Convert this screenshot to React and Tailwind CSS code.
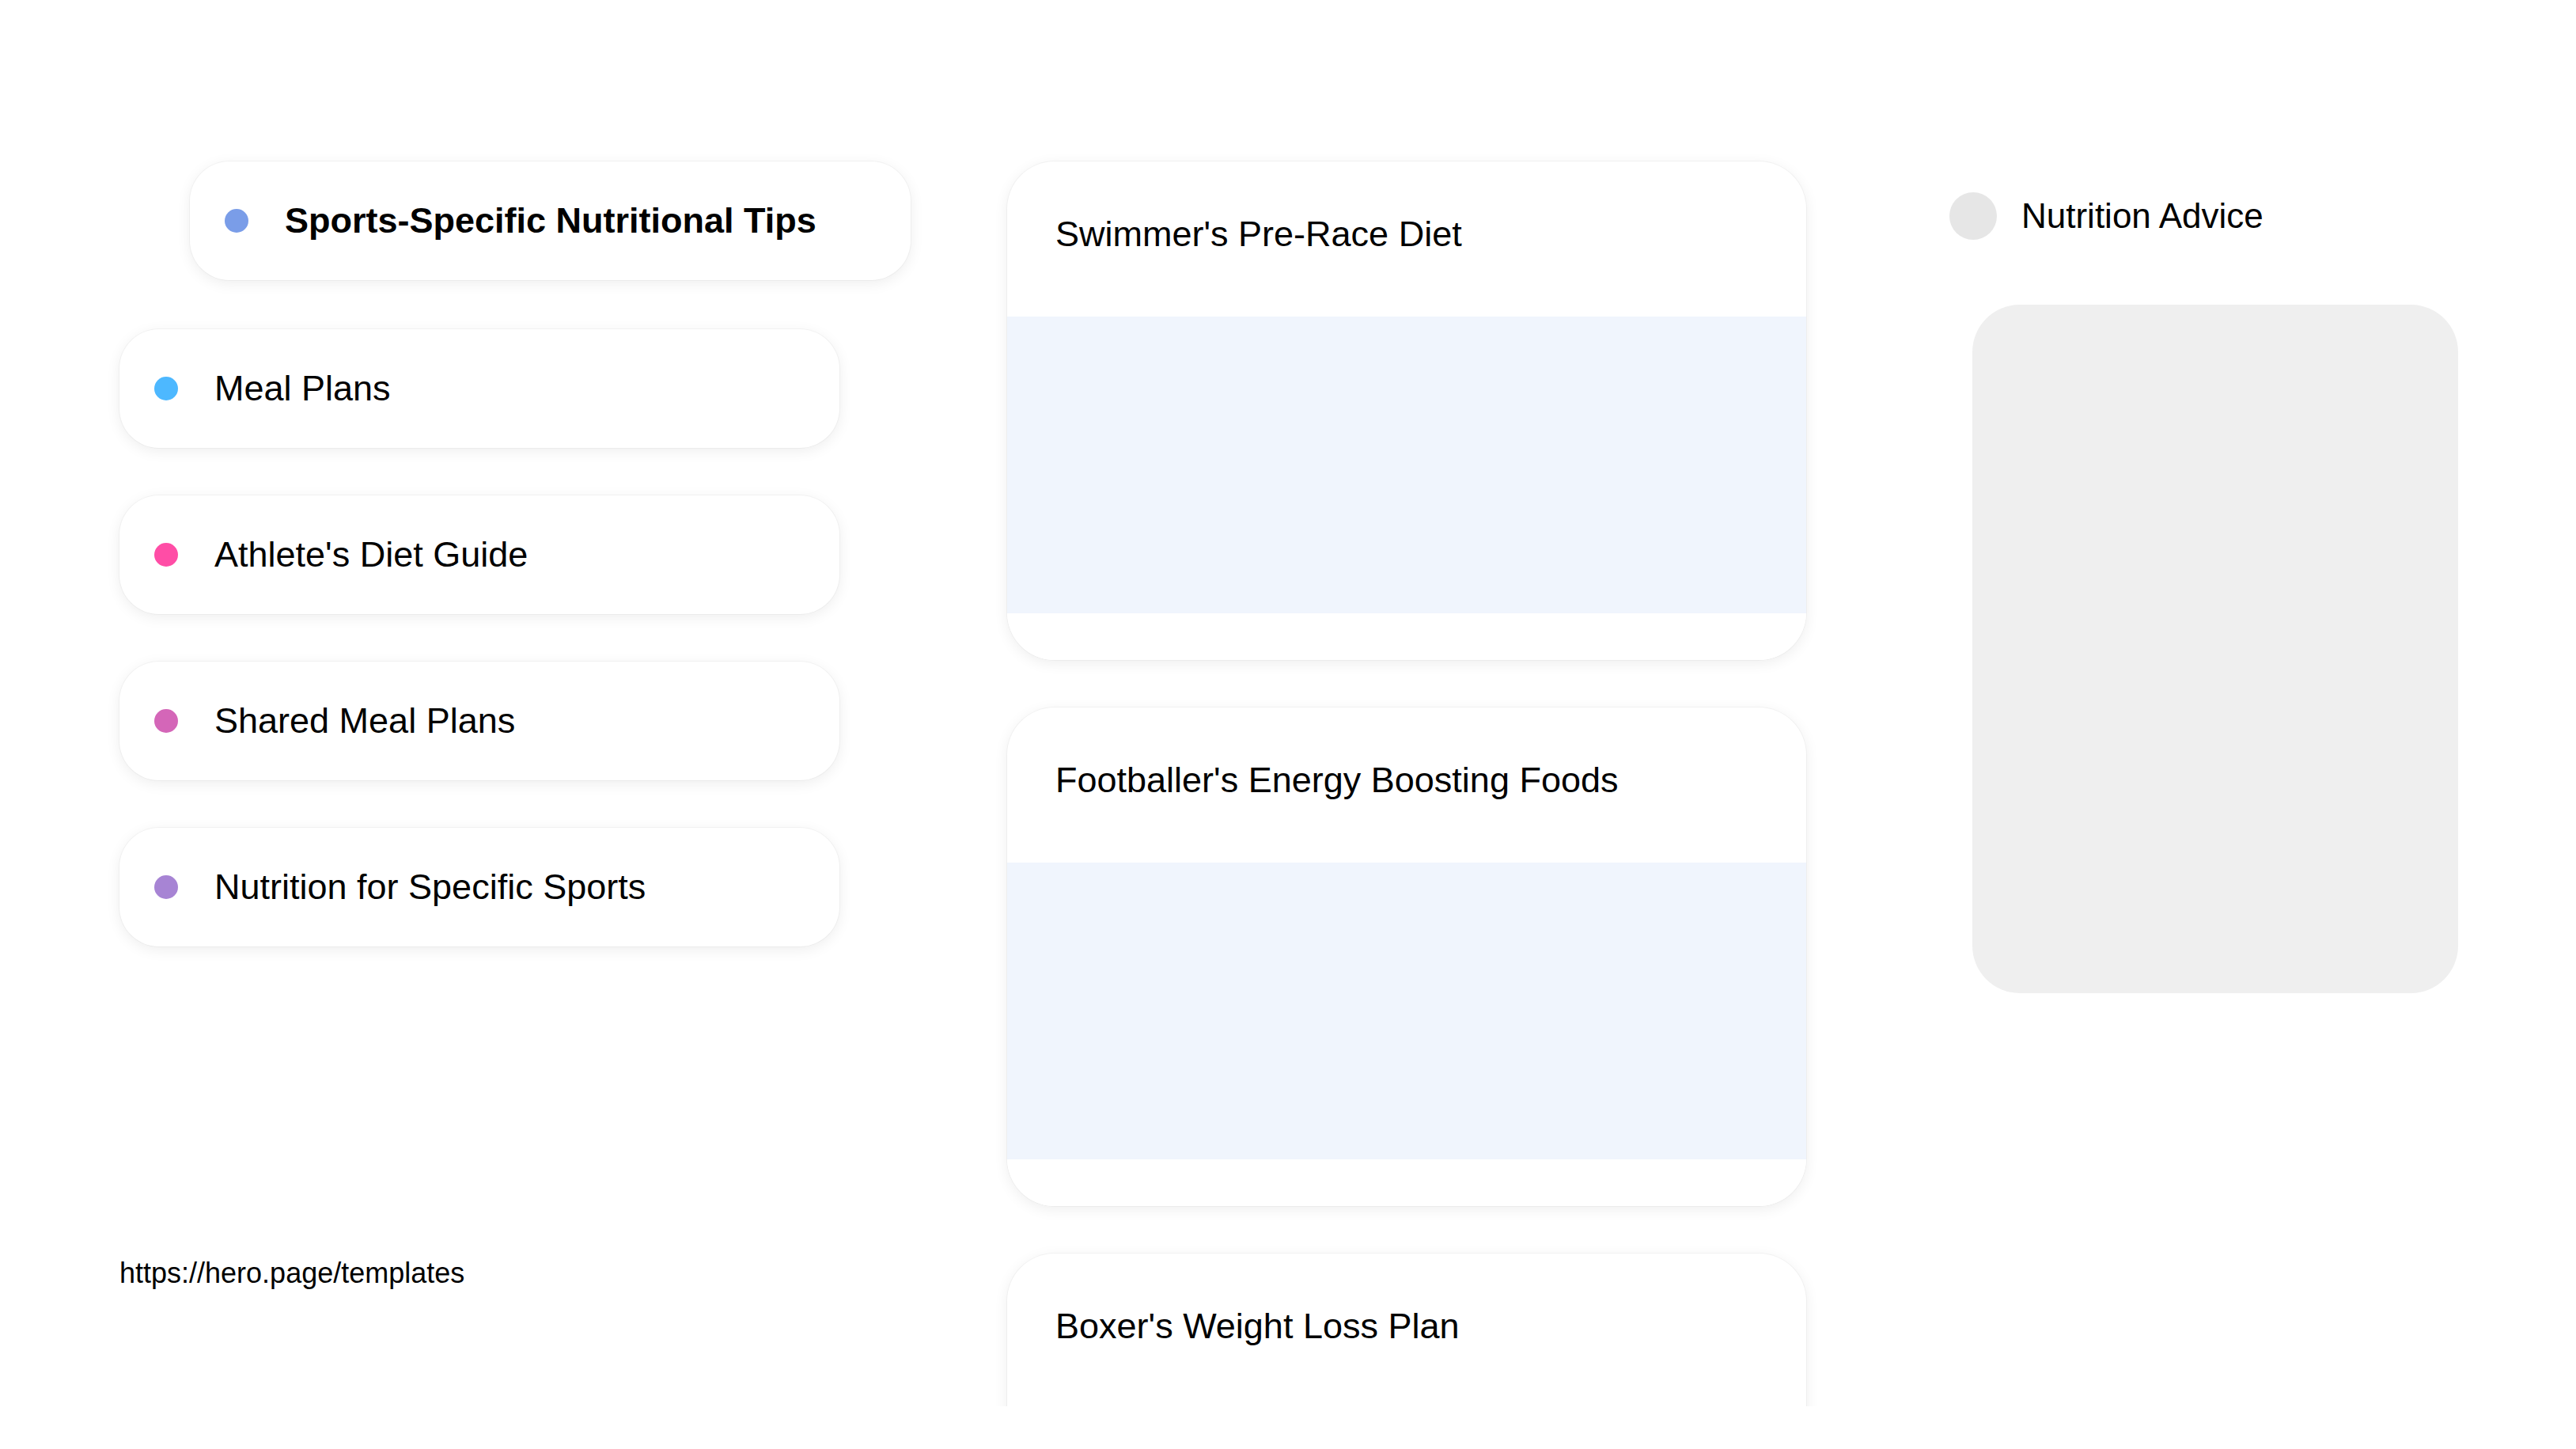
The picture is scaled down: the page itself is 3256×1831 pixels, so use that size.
import React from "react";

const pills = [
  { label: "Meal Plans", color: "bg-[#4db8ff]" },
  { label: "Athlete's Diet Guide", color: "bg-[#ff4da6]" },
  { label: "Shared Meal Plans", color: "bg-[#d466b8]" },
  { label: "Nutrition for Specific Sports", color: "bg-[#a784d4]" },
];

const cards = [
  "Swimmer's Pre-Race Diet",
  "Footballer's Energy Boosting Foods",
  "Boxer's Weight Loss Plan",
];

function Pill({ label, color, bold, extra }) {
  return (
    <div
      className={`h-[150px] rounded-[50px] bg-white flex items-center pl-[44px] shadow-[0_4px_18px_rgba(0,0,0,0.07),0_0_0_1px_rgba(0,0,0,0.035)] ${extra || ""}`}
    >
      <div className={`w-[30px] h-[30px] rounded-full shrink-0 ${color}`} />
      <span
        className={`ml-[46px] text-[45px] leading-[52px] text-black whitespace-nowrap ${bold ? "font-bold" : "font-normal"}`}
      >
        {label}
      </span>
    </div>
  );
}

function Card({ title }) {
  return (
    <div className="w-[1010px] h-[630px] shrink-0 rounded-[60px] bg-white overflow-hidden flex flex-col shadow-[0_4px_18px_rgba(0,0,0,0.07),0_0_0_1px_rgba(0,0,0,0.035)]">
      <div className="h-[196px] shrink-0 pl-[61px] pt-[66px]">
        <span className="text-[45px] leading-[52px] text-black whitespace-nowrap">{title}</span>
      </div>
      <div className="h-[375px] shrink-0 bg-[#f0f5fd]" />
      <div className="flex-1 bg-white" />
    </div>
  );
}

export default function App() {
  return (
    <div
      className="w-[3256px] h-[1831px] overflow-hidden bg-white flex pl-[151px] pt-[204px]"
      style={{ fontFamily: '"Liberation Sans", Arial, sans-serif' }}
    >
      {/* Left column */}
      <div className="w-[910px] shrink-0 flex flex-col">
        <Pill
          label="Sports-Specific Nutritional Tips"
          color="bg-[#7a9de8]"
          bold
          extra="ml-[89px] w-[911px]"
        />
        <div className="mt-[62px] flex flex-col gap-[60px]">
          {pills.map((p) => (
            <Pill key={p.label} label={p.label} color={p.color} extra="w-full" />
          ))}
        </div>
        <div className="mt-[392px] text-[36px] leading-[41px] text-black">
          https://hero.page/templates
        </div>
      </div>

      {/* Middle column */}
      <div className="ml-[172px] -mt-[40px] h-[1613px] w-[1090px] shrink-0 overflow-hidden px-[40px] pt-[40px]">
        <div className="flex flex-col gap-[60px]">
          {cards.map((c) => (
            <Card key={c} title={c} />
          ))}
        </div>
      </div>

      {/* Right column */}
      <div className="ml-[141px] mt-[39px] flex flex-col">
        <div className="flex items-center h-[60px]">
          <div className="w-[60px] h-[60px] rounded-full bg-[#e6e6e6] shrink-0" />
          <span className="ml-[31px] text-[44px] leading-[52px] text-black whitespace-nowrap">
            Nutrition Advice
          </span>
        </div>
        <div className="mt-[82px] ml-[29px] w-[614px] h-[870px] rounded-[60px] bg-[#efefef]" />
      </div>
    </div>
  );
}
